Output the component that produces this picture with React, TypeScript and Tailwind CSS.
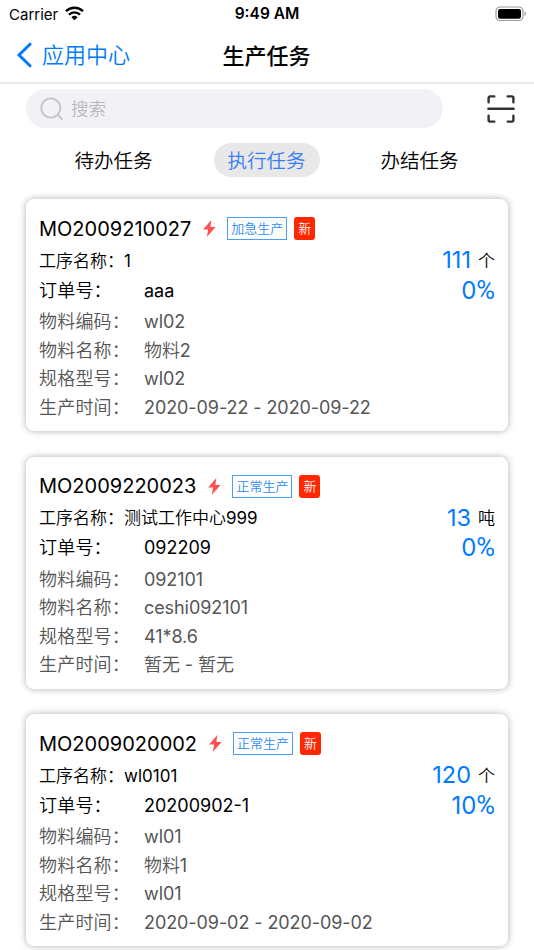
import clsx from "clsx";

type Task = {
  code: string;
  priority: string;
  process: string;
  amount: string;
  unit: string;
  progress: number;
  order: string;
  details: { label: string; value: string }[];
};

const tasks: Task[] = [
  {
    code: "MO2009210027",
    priority: "加急生产",
    process: "1",
    amount: "111",
    unit: "个",
    progress: 0,
    order: "aaa",
    details: [
      { label: "物料编码", value: "wl02" },
      { label: "物料名称", value: "物料2" },
      { label: "规格型号", value: "wl02" },
      { label: "生产时间", value: "2020-09-22 - 2020-09-22" },
    ],
  },
  {
    code: "MO2009220023",
    priority: "正常生产",
    process: "测试工作中心999",
    amount: "13",
    unit: "吨",
    progress: 0,
    order: "092209",
    details: [
      { label: "物料编码", value: "092101" },
      { label: "物料名称", value: "ceshi092101" },
      { label: "规格型号", value: "41*8.6" },
      { label: "生产时间", value: "暂无 - 暂无" },
    ],
  },
  {
    code: "MO2009020002",
    priority: "正常生产",
    process: "wl0101",
    amount: "120",
    unit: "个",
    progress: 10,
    order: "20200902-1",
    details: [
      { label: "物料编码", value: "wl01" },
      { label: "物料名称", value: "物料1" },
      { label: "规格型号", value: "wl01" },
      { label: "生产时间", value: "2020-09-02 - 2020-09-02" },
    ],
  },
];

const tabs = ["待办任务", "执行任务", "办结任务"];

function StatusBar() {
  return (
    <div className="grid h-7 grid-cols-3 items-center px-2">
      <div className="flex items-center gap-[7px] pl-px text-[15px]">
        <span>Carrier</span>
        <svg className="-mt-[2px]" width="19" height="15" viewBox="0 0 19 15" fill="none" stroke="#000">
          <path d="M1 5.2a12.2 12.2 0 0 1 17 0" strokeWidth="2.5" />
          <path d="M4 8.6a8 8 0 0 1 11 0" strokeWidth="2.4" />
          <path d="M9.5 14.2 6.4 11.2a4.5 4.5 0 0 1 6.2 0z" fill="#000" stroke="none" />
        </svg>
      </div>
      <span className="text-center text-[15.5px] font-semibold">9:49 AM</span>
      <svg className="-mt-px -mr-px justify-self-end" width="32" height="16" viewBox="0 0 32 16">
        <rect x="1" y="1" width="27" height="13.5" rx="4" fill="none" stroke="#9b9b9b" strokeWidth="1.2" />
        <rect x="3" y="3" width="23" height="9.7" rx="2.2" />
        <path d="M29.6 5.6c1.8.6 1.8 3.8 0 4.4z" fill="#9b9b9b" />
      </svg>
    </div>
  );
}

function NavBar() {
  return (
    <div className="grid h-14 grid-cols-3 items-center border-b-2 border-[#e9e9e9] text-[22px]">
      <div className="flex items-center gap-[10px] pl-4 whitespace-nowrap text-[#007aff]">
        <svg width="16" height="26" viewBox="0 0 16 26" fill="none" stroke="currentColor" strokeWidth="3">
          <path d="M14 2.2 3 13l11 10.8" strokeLinecap="round" />
        </svg>
        <span>应用中心</span>
      </div>
      <span className="pr-px pb-[3px] text-center font-['Noto_Sans_CJK_SC',sans-serif] font-medium">生产任务</span>
    </div>
  );
}

function SearchBar() {
  return (
    <div className="flex items-center justify-between pt-[5px] pr-[18px] pl-[26px]">
      <div className="flex h-[39px] w-[417px] items-center gap-[7px] rounded-full bg-[#f2f1f6] pl-[14px]">
        <svg width="24" height="24" viewBox="0 0 24 24" fill="none" stroke="#c6c6c6" strokeWidth="1.9">
          <circle cx="10.8" cy="11" r="9.6" />
          <path d="m17.8 18 4.3 4.2" strokeLinecap="round" />
        </svg>
        <span className="text-[17.5px] text-[#b9b9bb]">搜索</span>
      </div>
      <svg width="30" height="30" viewBox="0 0 30 30" fill="none" stroke="#333" strokeWidth="2.4" strokeLinecap="round">
        <path d="M2.6 8.3V4a1.6 1.6 0 0 1 1.6-1.6h4.1M21.7 2.4h4.1A1.6 1.6 0 0 1 27.4 4v4.3M27.4 21.7V26a1.6 1.6 0 0 1-1.6 1.6h-4.1M8.3 27.6H4.2A1.6 1.6 0 0 1 2.6 26v-4.3" />
        <path d="M2.4 14.7h25.2" />
      </svg>
    </div>
  );
}

function Tabs() {
  return (
    <div className="mt-[15px] flex justify-between px-[61px] text-[19.5px]">
      {tabs.map((tab, i) => (
        <span
          key={tab}
          className={clsx(
            "flex h-[34px] w-[106px] items-center justify-center rounded-full pt-[3px] pr-px",
            i === 1 && "bg-[#e8e8e8] text-[#3a7df5]"
          )}
        >
          {tab}
        </span>
      ))}
    </div>
  );
}

function TaskCard({ task }: { task: Task }) {
  return (
    <div className="h-[232px] rounded-lg bg-white px-[13px] pt-[17.5px] shadow-[0_0_7px_rgba(0,0,0,0.32)]">
      <div className="flex h-6 items-center">
        <span className="text-[20px]">{task.code}</span>
        <svg className="ml-3" width="13" height="17" viewBox="0 0 13 17" fill="#ff4f4f">
          <path d="M8.3 0 .2 9.4h5L3.8 17l8.8-9.9H7.4z" />
        </svg>
        <span className="ml-[11px] flex h-[23px] items-center border border-[#4a9ff5] px-[3px] text-[13px] text-[#2b8cf0]">
          {task.priority}
        </span>
        <span className="ml-[7px] flex h-[23px] w-[21px] items-center justify-center rounded-[3px] bg-[#ff2600] text-[13px] text-white">
          新
        </span>
      </div>

      <div className="mt-[5px] flex h-[30px] items-center justify-between text-[17px]">
        <span className="pt-px">工序名称：{task.process}</span>
        <span className="flex items-center gap-[7px]">
          <span className="pb-px text-[23.5px] text-[#007aff]">{task.amount}</span>
          <span className="pt-px">{task.unit}</span>
        </span>
      </div>

      <div className="flex h-[30px] items-center text-[18px]">
        <span className="w-[105px] tracking-[0.2px]">订单号：</span>
        <span className="flex-1">{task.order}</span>
        <span className="text-[24px] text-[#007aff]">
          {task.progress}
          <span className="font-['Roboto'] text-[25.5px] leading-[0]">%</span>
        </span>
      </div>

      <div className="mt-[2.5px] text-[18px] text-[#555]">
        {task.details.map(({ label, value }) => (
          <div key={label} className="flex h-[28.5px] items-center">
            <span className="w-[105px] tracking-[0.2px]">{label}：</span>
            <span className="tracking-[-0.08px]">{value}</span>
          </div>
        ))}
      </div>
    </div>
  );
}

export default function App() {
  return (
    <div className="h-[950px] overflow-hidden bg-white font-['Inter','Noto_Sans_CJK_SC_DemiLight','Noto_Sans_CJK_SC',sans-serif] leading-none text-black">
      <StatusBar />
      <NavBar />
      <SearchBar />
      <Tabs />
      <div className="mt-[22px] flex flex-col gap-[25.5px] px-[26px]">
        {tasks.map((task) => (
          <TaskCard key={task.code} task={task} />
        ))}
      </div>
    </div>
  );
}
